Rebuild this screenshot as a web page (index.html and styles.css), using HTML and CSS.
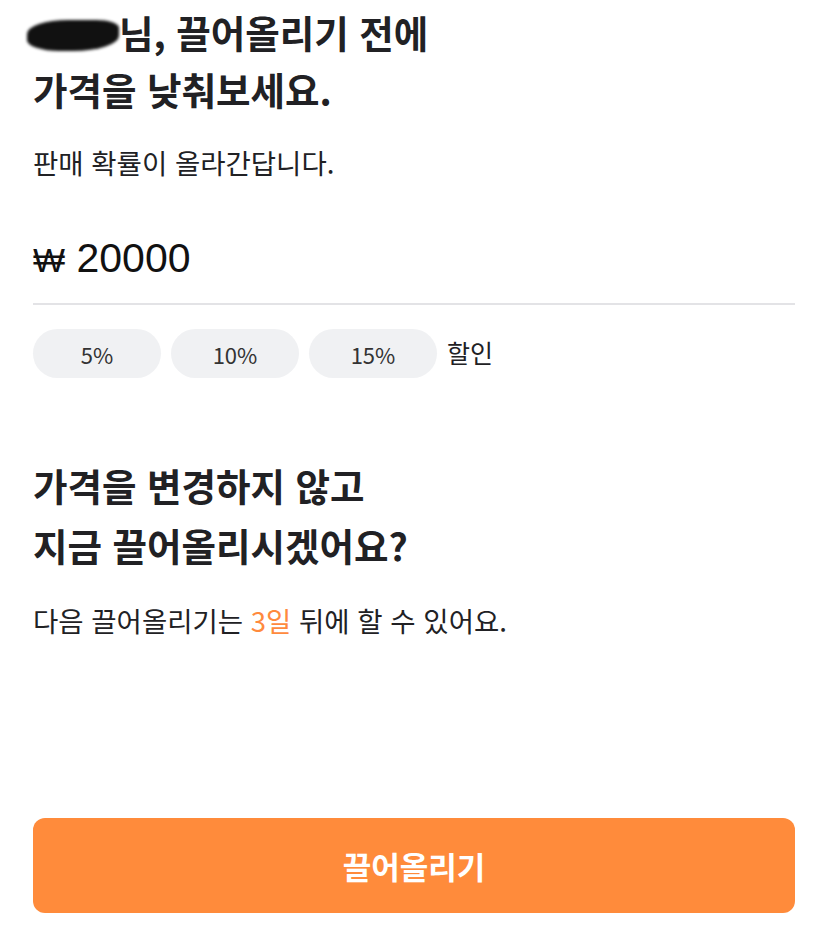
FILE: index.html
```html
<!DOCTYPE html>
<html lang="ko">
<head>
<meta charset="utf-8">
<link rel="stylesheet" href="styles.css">
</head>
<body>
<main class="page">
  <section class="intro">
    <h1 class="title"><span class="redact" aria-label="사용자"></span>님, 끌어올리기 전에<br>가격을 낮춰보세요.</h1>
    <p class="desc">판매 확률이 올라간답니다.</p>
  </section>

  <section class="price">
    <div class="price-field"><span class="won">₩</span> <span class="amount">20000</span></div>
    <div class="discounts">
      <button class="chip">5%</button>
      <button class="chip">10%</button>
      <button class="chip">15%</button>
      <span class="chip-label">할인</span>
    </div>
  </section>

  <section class="bump">
    <h2 class="title title-2">가격을 변경하지 않고<br>지금 끌어올리시겠어요?</h2>
    <p class="desc">다음 끌어올리기는 <span class="accent">3일</span> 뒤에 할 수 있어요.</p>
  </section>

  <div class="spacer"></div>

  <button class="cta">끌어올리기</button>
</main>
</body>
</html>
```
FILE: styles.css
```css
html, body {
  margin: 0;
  padding: 0;
  background: #ffffff;
}
body {
  font-family: "Noto Sans CJK KR", "Noto Sans", sans-serif;
  color: #212124;
}
.page {
  width: 828px;
  height: 938px;
  box-sizing: border-box;
  padding: 3px 33px 25px;
  display: flex;
  flex-direction: column;
}
.title {
  margin: 0;
  font-size: 37.5px;
  font-weight: 700;
  line-height: 57px;
  letter-spacing: 0;
  color: #212124;
}
.title-2 {
  line-height: 60px;
}
.redact {
  display: inline-block;
  width: 92px;
  height: 31px;
  vertical-align: -3px;
  margin-left: -6px;
  margin-right: 0;
  background: #111;
  border-radius: 45% 25% 50% 35%;
  filter: blur(1.5px);
}
.desc {
  margin: 0;
  font-size: 27.5px;
  line-height: 36px;
  color: #212124;
  letter-spacing: 0;
}
.intro .desc {
  margin-top: 27px;
}
.price {
  margin-top: 54px;
}
.price-field {
  font-family: "Liberation Sans", "DejaVu Sans", sans-serif;
  font-size: 41px;
  line-height: 48px;
  color: #111;
  padding-bottom: 19px;
  border-bottom: 2px solid #e3e3e6;
}
.won {
  font-family: "DejaVu Sans", sans-serif;
  font-size: 34px;
  font-weight: 300;
}
.discounts {
  margin-top: 24px;
  display: flex;
  align-items: center;
  gap: 10px;
}
.chip {
  width: 128px;
  height: 49px;
  border: 0;
  border-radius: 25px;
  background: #f0f1f3;
  font-family: "Noto Sans CJK KR", sans-serif;
  font-size: 22px;
  color: #333;
  padding: 0;
}
.chip-label {
  font-size: 25px;
  color: #212124;
  margin-top: -4px;
}
.bump {
  margin-top: 77px;
}
.bump .desc {
  margin-top: 27px;
}
.accent {
  color: #ff8a3d;
}
.spacer {
  flex: 1;
}
.cta {
  width: 100%;
  height: 95px;
  flex: none;
  border: 0;
  border-radius: 12px;
  background: #ff8b3b;
  color: #fff;
  font-family: "Noto Sans CJK KR", sans-serif;
  font-size: 31px;
  font-weight: 700;
  letter-spacing: 0;
}
```
